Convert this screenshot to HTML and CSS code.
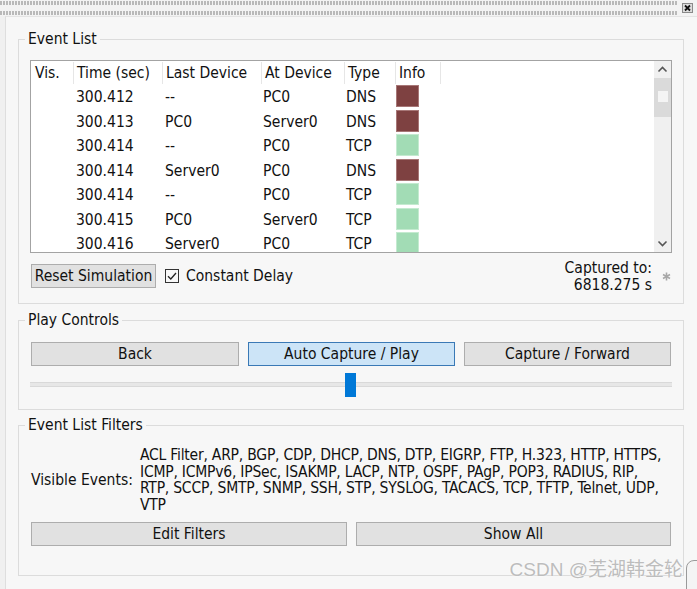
FILE: index.html
```html
<!DOCTYPE html>
<html>
<head>
<meta charset="utf-8">
<title>Simulation Panel</title>
<link rel="stylesheet" href="styles.css">
</head>
<body>
<div class="titlebar">
  <div class="grip"><div class="dots"></div><div class="dots"></div></div>
  <div class="close">
    <svg width="11" height="10" viewBox="0 0 11 10"><rect x="0.5" y="0.5" width="10" height="9" fill="#dcdcdc" stroke="#8a8a8a"/><path d="M3 2.5 L8 7.5 M8 2.5 L3 7.5" stroke="#111" stroke-width="1.8"/></svg>
  </div>
</div>
<div class="panel">
  <fieldset class="group group-events">
    <legend>Event List</legend>
    <div class="table">
      <div class="table-body">
        <div class="thead">
          <div class="th">Vis.</div><div class="th">Time (sec)</div><div class="th">Last Device</div><div class="th">At Device</div><div class="th">Type</div><div class="th">Info</div>
        </div>
        <div class="tr"><div class="td"></div><div class="td">300.412</div><div class="td">--</div><div class="td">PC0</div><div class="td">DNS</div><div class="td"><span class="chip dns"></span></div></div>
        <div class="tr"><div class="td"></div><div class="td">300.413</div><div class="td">PC0</div><div class="td">Server0</div><div class="td">DNS</div><div class="td"><span class="chip dns"></span></div></div>
        <div class="tr"><div class="td"></div><div class="td">300.414</div><div class="td">--</div><div class="td">PC0</div><div class="td">TCP</div><div class="td"><span class="chip tcp"></span></div></div>
        <div class="tr"><div class="td"></div><div class="td">300.414</div><div class="td">Server0</div><div class="td">PC0</div><div class="td">DNS</div><div class="td"><span class="chip dns"></span></div></div>
        <div class="tr"><div class="td"></div><div class="td">300.414</div><div class="td">--</div><div class="td">PC0</div><div class="td">TCP</div><div class="td"><span class="chip tcp"></span></div></div>
        <div class="tr"><div class="td"></div><div class="td">300.415</div><div class="td">PC0</div><div class="td">Server0</div><div class="td">TCP</div><div class="td"><span class="chip tcp"></span></div></div>
        <div class="tr"><div class="td"></div><div class="td">300.416</div><div class="td">Server0</div><div class="td">PC0</div><div class="td">TCP</div><div class="td"><span class="chip tcp"></span></div></div>
      </div>
      <div class="vscroll">
        <div class="arrow"><svg width="11" height="7" viewBox="0 0 11 7"><path d="M1.5 5.5 L5.5 1.5 L9.5 5.5" fill="none" stroke="#555" stroke-width="1.6"/></svg></div>
        <div class="thumb"><span class="thumb-mark"></span></div>
        <div class="track"></div>
        <div class="arrow"><svg width="11" height="7" viewBox="0 0 11 7"><path d="M1.5 1.5 L5.5 5.5 L9.5 1.5" fill="none" stroke="#555" stroke-width="1.6"/></svg></div>
      </div>
    </div>
    <div class="event-footer">
      <button class="btn btn-reset">Reset Simulation</button>
      <label class="check">
        <svg class="check-box" width="14" height="14" viewBox="0 0 14 14"><rect x="0.5" y="0.5" width="13" height="13" fill="#f8f8f8" stroke="#333"/><path d="M3 7.2 L5.8 10 L11 4" fill="none" stroke="#222" stroke-width="1.3"/></svg>
        <span>Constant Delay</span>
      </label>
      <div class="captured">
        <div>Captured to:</div>
        <div>6818.275 s</div>
      </div>
      <svg class="star" width="9" height="9" viewBox="0 0 9 9"><path d="M4.5 0.5 V8.5 M1 2.5 L8 6.5 M8 2.5 L1 6.5" stroke="#a8a8a8" stroke-width="1.6"/></svg>
    </div>
  </fieldset>

  <fieldset class="group group-play">
    <legend>Play Controls</legend>
    <div class="play-buttons">
      <button class="btn">Back</button>
      <button class="btn btn-active">Auto Capture / Play</button>
      <button class="btn">Capture / Forward</button>
    </div>
    <div class="slider">
      <div class="slider-track"></div>
      <div class="slider-thumb"></div>
    </div>
  </fieldset>

  <fieldset class="group group-filters">
    <legend>Event List Filters</legend>
    <div class="visible">
      <div class="visible-label">Visible Events:</div>
      <div class="visible-list">ACL Filter, ARP, BGP, CDP, DHCP, DNS, DTP, EIGRP, FTP, H.323, HTTP, HTTPS,<br>ICMP, ICMPv6, IPSec, ISAKMP, LACP, NTP, OSPF, PAgP, POP3, RADIUS, RIP,<br>RTP, SCCP, SMTP, SNMP, SSH, STP, SYSLOG, TACACS, TCP, TFTP, Telnet, UDP,<br>VTP</div>
    </div>
    <div class="filter-buttons">
      <button class="btn">Edit Filters</button>
      <button class="btn">Show All</button>
    </div>
  </fieldset>
</div>
<div class="watermark">CSDN @芜湖韩金轮</div>
<div class="corner-widget"></div>
</body>
</html>
```

FILE: styles.css
```css
html, body {
  margin: 0;
  padding: 0;
  height: 100%;
  overflow: hidden;
}
body {
  background: #f0f0f0;
  font-family: "DejaVu Sans Condensed", "DejaVu Sans", sans-serif;
  font-stretch: condensed;
  font-size: 15.5px;
  color: #111;
  position: relative;
}
.titlebar {
  height: 16px;
  display: flex;
  background: #f3f3f3;
}
.grip {
  width: 678px;
  display: flex;
  flex-direction: column;
  justify-content: space-between;
  padding: 1px 0;
  box-sizing: border-box;
}
.dots {
  height: 4px;
  background-image: radial-gradient(circle at 1px 1px, #b9b9b9 0.8px, transparent 1.1px);
  background-size: 3px 2px;
}
.close {
  padding: 3px 0 0 4px;
  line-height: 0;
}
.panel {
  margin-left: 5px;
  border-left: 1px solid #dedede;
  border-top: 1px solid #e4e4e4;
  background: #f7f7f7;
  padding: 14px 13px 0 12px;
  height: 573px;
  box-sizing: border-box;
}
.group {
  margin: 0;
  border: 1px solid #dcdcdc;
  padding: 0 11px;
  min-width: 0;
}
.group legend {
  padding: 0 3px;
  margin-left: -5px;
  line-height: 16px;
}
.group-play { margin-top: 8px; padding-bottom: 12px; }
.group-filters { margin-top: 7px; padding-bottom: 29px; }
.group-events { padding-bottom: 10px; }

/* table */
.table {
  margin-top: 13px;
  height: 193px;
  box-sizing: border-box;
  border: 1px solid #a3a3a3;
  background: #fff;
  display: flex;
  overflow: hidden;
}
.table-body {
  flex: 1;
  overflow: hidden;
}
.thead, .tr {
  display: grid;
  grid-template-columns: 43px 89px 99px 83px 51px 45px;
}
.thead { height: 24px; }
.th {
  border-right: 1px solid #e6e6e6;
  margin: 1px 0 1px;
  padding-left: 3px;
  line-height: 22px;
  white-space: nowrap;
}
.th:first-child { padding-left: 4px; }
.tr { height: 24.5px; }
.td {
  padding-left: 1px;
  line-height: 25px;
  white-space: nowrap;
}
.td:nth-child(2) { padding-left: 2px; }
.td:nth-child(3) { padding-left: 2px; }
.chip {
  display: block;
  width: 23px;
  height: 22px;
  margin: 0 0 0 -1px;
  box-sizing: border-box;
}
.chip.dns { background: #7e4141; border: 1px solid #a77777; }
.chip.tcp { background: #a2dcb5; border: 1px solid #c4ead0; }

.vscroll {
  width: 17px;
  background: #f0f0f0;
  display: flex;
  flex-direction: column;
}
.arrow {
  height: 17px;
  display: flex;
  align-items: center;
  justify-content: center;
}
.thumb {
  height: 39px;
  background: #dadada;
  display: flex;
  justify-content: center;
  padding-top: 13px;
  box-sizing: border-box;
}
.thumb-mark {
  width: 10px;
  height: 11px;
  background: #f4f4f4;
}
.track { flex: 1; }

/* footer */
.event-footer {
  margin-top: 6px;
  height: 34px;
  display: flex;
  align-items: center;
}
.btn {
  font: inherit;
  color: #111;
  background: #e1e1e1;
  border: 1px solid #adadad;
  height: 24px;
  padding: 0;
  line-height: 22px;
  border-radius: 0;
}
.btn-reset {
  width: 125px;
  margin-left: 1px;
}
.check {
  display: flex;
  align-items: center;
  margin-left: 9px;
}
.check-box { margin-right: 7px; }
.captured {
  margin-left: auto;
  text-align: right;
  line-height: 17px;
  padding-top: 1px;
}
.star { margin-left: 10px; margin-right: 1px; }

/* play */
.play-buttons {
  margin: 14px 1px 0;
  display: grid;
  grid-template-columns: 208px 207px 207px;
  column-gap: 9px;
}
.btn-active {
  background: #cce4f7;
  border-color: #3a79b6;
}
.slider {
  position: relative;
  margin-top: 7px;
  height: 24px;
}
.slider-track {
  position: absolute;
  left: 0;
  right: 0;
  top: 9px;
  height: 5px;
  background: #e7e7e7;
  border-top: 1px solid #d9d9d9;
  border-bottom: 1px solid #d9d9d9;
  box-sizing: border-box;
}
.slider-thumb {
  position: absolute;
  left: 315px;
  top: 0;
  width: 11px;
  height: 24px;
  background: #0078d7;
}

/* filters */
.visible {
  margin-top: 14px;
  display: flex;
  align-items: center;
  padding-left: 1px;
}
.visible-label {
  width: 109px;
}
.visible-list {
  line-height: 16.7px;
  white-space: nowrap;
  letter-spacing: -0.22px;
}
.filter-buttons {
  margin: 8px 1px 0;
  display: grid;
  grid-template-columns: 316px 315px;
  column-gap: 9px;
}

.watermark {
  position: absolute;
  right: 14px;
  top: 557px;
  font-family: "Liberation Sans", "Noto Sans CJK SC", sans-serif;
  font-stretch: normal;
  font-size: 19px;
  line-height: 26px;
  color: #bdbdbd;
  text-shadow: 0 0 2px #fff;
}
.corner-widget {
  position: absolute;
  left: 686px;
  top: 560px;
  width: 24px;
  height: 40px;
  border: 1.5px solid #9a9a9a;
  border-radius: 8px;
  background: #f4f4f4;
}
```
